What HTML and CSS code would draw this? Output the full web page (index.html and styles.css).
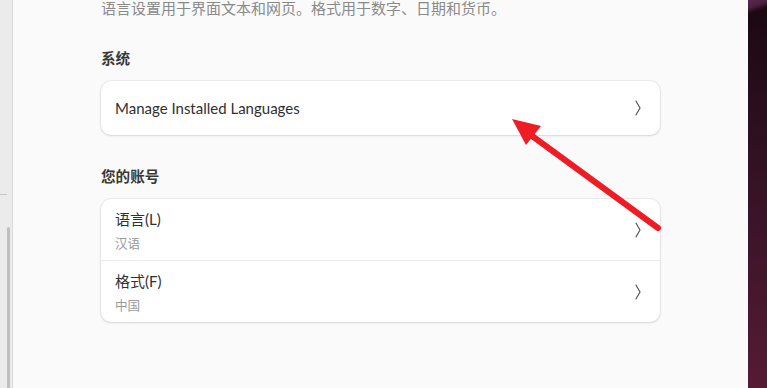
FILE: index.html
```html
<!DOCTYPE html>
<html lang="zh-CN">
<head>
    <meta charset="UTF-8">
    <meta name="viewport" content="width=device-width, initial-scale=1.0">
    <title>区域和语言</title>
    <link rel="stylesheet" href="styles.css">
</head>
<body>
    <div class="sidebar">
        <div class="sidebar-line"></div>
        <div class="scrollbar"></div>
    </div>

    <div class="main">
        <div class="content">
            <p class="desc">语言设置用于界面文本和网页。格式用于数字、日期和货币。</p>

            <h3 class="group-title">系统</h3>
            <div class="card">
                <div class="row single">
                    <span class="row-title">Manage Installed Languages</span>
                    <svg class="chevron" width="6" height="16" viewBox="0 0 6 16"><polyline points="0.8,0.8 5,8 0.8,15.2" fill="none" stroke="#555" stroke-width="1.2"/></svg>
                </div>
            </div>

            <h3 class="group-title second">您的账号</h3>
            <div class="card">
                <div class="row">
                    <div class="row-text">
                        <span class="row-title">语言(L)</span>
                        <span class="row-sub">汉语</span>
                    </div>
                    <svg class="chevron" width="6" height="16" viewBox="0 0 6 16"><polyline points="0.8,0.8 5,8 0.8,15.2" fill="none" stroke="#555" stroke-width="1.2"/></svg>
                </div>
                <div class="row">
                    <div class="row-text">
                        <span class="row-title">格式(F)</span>
                        <span class="row-sub">中国</span>
                    </div>
                    <svg class="chevron" width="6" height="16" viewBox="0 0 6 16"><polyline points="0.8,0.8 5,8 0.8,15.2" fill="none" stroke="#555" stroke-width="1.2"/></svg>
                </div>
            </div>
        </div>

        <!-- annotation arrow drawn over the page -->
        <svg class="arrow" width="767" height="388" viewBox="0 0 767 388">
            <line x1="658" y1="228" x2="528" y2="133" stroke="#ee1c25" stroke-width="6" stroke-linecap="round"/>
            <polygon points="512,119 541,126 526,145" fill="#ee1c25"/>
        </svg>
    </div>

    <div class="desktop"></div>
</body>
</html>
```

FILE: styles.css
```css
body {
    margin: 0;
    height: 388px;
    overflow: hidden;
    display: flex;
    font-family: "Lato", "Noto Sans CJK SC", sans-serif;
    color: #303030;
    position: relative;
}

.sidebar {
    width: 12px;
    background: #ebebeb;
    border-right: 1px solid #dadada;
    display: flex;
    flex-direction: column;
    padding-top: 194px;
}

.sidebar-line {
    width: 7px;
    height: 1px;
    background: #c6c6c6;
}

.scrollbar {
    width: 3px;
    margin-left: 7px;
    margin-top: 32px;
    flex: 1;
    background: #bfbfbf;
    border-radius: 2px 2px 0 0;
}

.main {
    flex: 1;
    background: #fafafa;
    display: flex;
    justify-content: center;
}

.content {
    width: 559px;
}

.desc {
    margin: -2px 0 0;
    font-size: 15px;
    line-height: 20px;
    color: #8a8a8a;
    white-space: nowrap;
}

.group-title {
    margin: 31px 0 12px;
    font-size: 14.6px;
    line-height: 20px;
    font-weight: 700;
    color: #383838;
}

.group-title.second {
    margin-top: 32px;
    margin-bottom: 12px;
}

.card {
    background: #ffffff;
    border-radius: 10px;
    box-shadow: 0 0 0 1px rgba(0, 0, 0, 0.05), 0 1px 3px rgba(0, 0, 0, 0.1);
}

.row {
    height: 61px;
    padding: 0 19px 0 14px;
    display: flex;
    align-items: center;
    justify-content: space-between;
    border-top: 1px solid #ebebeb;
}

.row:first-child {
    border-top: none;
}

.row.single {
    height: 54px;
}

.row-title {
    font-size: 15px;
    line-height: 20px;
    color: #303030;
}

.row-text {
    display: flex;
    flex-direction: column;
    gap: 6px;
    padding-top: 2px;
}

.row-sub {
    font-size: 12.6px;
    line-height: 18px;
    color: #9a9a9a;
}

.chevron {
    display: block;
}

.arrow {
    position: absolute;
    left: 0;
    top: 0;
    pointer-events: none;
}

.desktop {
    width: 19px;
    background:
        linear-gradient(160deg, #5a2a4c 0, #4a2040 8px, #2a0d1c 12px, transparent 14px),
        linear-gradient(to bottom, #1a0811 0%, #3a1428 55%, #561a34 100%);
}
```
